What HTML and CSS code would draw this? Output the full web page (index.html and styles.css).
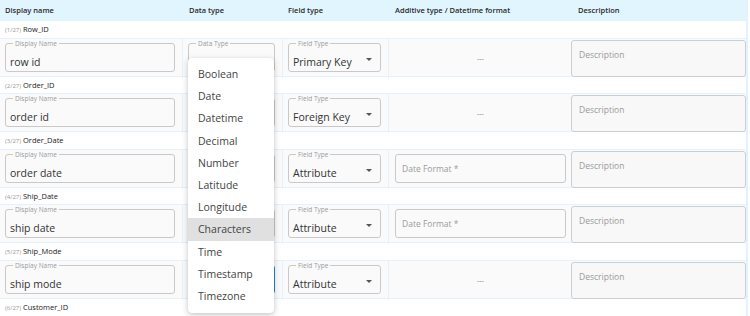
FILE: index.html
```html
<!DOCTYPE html>
<html lang="en">
  <head>
    <meta charset="UTF-8" />
    <title>Column mapping</title>
    <link rel="stylesheet" href="styles.css">
  </head>
  <body>
    <div class="mapping">
      <div class="head">
        <div>Display name</div>
        <div>Data type</div>
        <div>Field type</div>
        <div>Additive type / Datetime format</div>
        <div>Description</div>
      </div>

      <div class="col-label"><span class="idx">(1/27)</span> Row_ID</div>
      <div class="row">
        <div class="cell"><div class="field"><span class="legend">Display Name</span><span class="value">row id</span></div></div>
        <div class="cell"><div class="field"><span class="legend">Data Type</span></div></div>
        <div class="cell"><div class="field"><span class="legend">Field Type</span><span class="value">Primary Key</span><span class="caret"></span></div></div>
        <div class="cell dash">---</div>
        <div class="cell desc"><textarea placeholder="Description"></textarea></div>
      </div>

      <div class="col-label"><span class="idx">(2/27)</span> Order_ID</div>
      <div class="row">
        <div class="cell"><div class="field"><span class="legend">Display Name</span><span class="value">order id</span></div></div>
        <div class="cell"><div class="field"><span class="legend">Data Type</span></div></div>
        <div class="cell"><div class="field"><span class="legend">Field Type</span><span class="value">Foreign Key</span><span class="caret"></span></div></div>
        <div class="cell dash">---</div>
        <div class="cell desc"><textarea placeholder="Description"></textarea></div>
      </div>

      <div class="col-label"><span class="idx">(3/27)</span> Order_Date</div>
      <div class="row">
        <div class="cell"><div class="field"><span class="legend">Display Name</span><span class="value">order date</span></div></div>
        <div class="cell"><div class="field"><span class="legend">Data Type</span></div></div>
        <div class="cell"><div class="field"><span class="legend">Field Type</span><span class="value">Attribute</span><span class="caret"></span></div></div>
        <div class="cell"><input class="format" placeholder="Date Format *" /></div>
        <div class="cell desc"><textarea placeholder="Description"></textarea></div>
      </div>

      <div class="col-label"><span class="idx">(4/27)</span> Ship_Date</div>
      <div class="row">
        <div class="cell"><div class="field"><span class="legend">Display Name</span><span class="value">ship date</span></div></div>
        <div class="cell"><div class="field"><span class="legend">Data Type</span></div></div>
        <div class="cell"><div class="field"><span class="legend">Field Type</span><span class="value">Attribute</span><span class="caret"></span></div></div>
        <div class="cell"><input class="format" placeholder="Date Format *" /></div>
        <div class="cell desc"><textarea placeholder="Description"></textarea></div>
      </div>

      <div class="col-label"><span class="idx">(5/27)</span> Ship_Mode</div>
      <div class="row">
        <div class="cell"><div class="field"><span class="legend">Display Name</span><span class="value">ship mode</span></div></div>
        <div class="cell"><div class="field focused"><span class="legend">Data Type</span></div></div>
        <div class="cell"><div class="field"><span class="legend">Field Type</span><span class="value">Attribute</span><span class="caret"></span></div></div>
        <div class="cell dash">---</div>
        <div class="cell desc"><textarea placeholder="Description"></textarea></div>
      </div>

      <div class="col-label"><span class="idx">(6/27)</span> Customer_ID</div>

      <ul class="menu">
        <li>Boolean</li>
        <li>Date</li>
        <li>Datetime</li>
        <li>Decimal</li>
        <li>Number</li>
        <li>Latitude</li>
        <li>Longitude</li>
        <li class="active">Characters</li>
        <li>Time</li>
        <li>Timestamp</li>
        <li>Timezone</li>
      </ul>
    </div>
  </body>
</html>
```

FILE: styles.css
```css
* {
  margin: 0;
  padding: 0;
  box-sizing: border-box;
  font-family: "Open Sans", "Liberation Sans", sans-serif;
}

body {
  background: #fff;
  color: #333;
  overflow: hidden;
}

.mapping {
  position: relative;
  width: 748px;
  border-right: 2px solid #e3f3fc;
}

.head,
.row {
  display: grid;
  grid-template-columns: 182px 100px 106px 181px 177px;
}

.head {
  height: 21px;
  background: #e1f5fe;
  font-size: 7.5px;
  font-weight: 600;
  line-height: 21px;
  color: #2a2a2a;
}

.head div {
  padding-left: 5px;
}

.head div:nth-child(2) {
  padding-left: 7px;
}

.head div:nth-child(3) {
  padding-left: 6px;
}

.head div:nth-child(4) {
  padding-left: 7px;
}

.head div:nth-child(5) {
  padding-left: 9px;
}

.col-label {
  height: 16.6px;
  line-height: 16.6px;
  padding-left: 5px;
  font-size: 7.5px;
  color: #222;
}

.idx {
  font-size: 6px;
  color: #999;
}

.row {
  height: 39px;
  background: #fafafa;
  border-top: 1px solid #e3f2fd;
  border-bottom: 1px solid #e3f2fd;
}

.cell {
  padding: 4px 7px 4px 5px;
}

.cell + .cell {
  border-left: 1px solid #e3f2fd;
}

.cell:nth-child(4) {
  padding: 4px 3px 4px 6px;
}

.cell.desc {
  padding: 0 0 1px 2px;
  border-left: 0;
}

.dash {
  display: flex;
  align-items: center;
  justify-content: center;
  font-size: 7px;
  color: #777;
  padding-bottom: 9px;
}

.field {
  position: relative;
  height: 29px;
  border: 1px solid #c9c9c9;
  border-radius: 3px;
  padding: 11px 0 0 4px;
}

.field.focused {
  border-color: #1e88e5;
}

.legend {
  position: absolute;
  top: -5px;
  left: 7px;
  padding: 0 2px;
  background: #fafafa;
  font-size: 6.5px;
  line-height: 9px;
  color: #9a9a9a;
}

.value {
  display: block;
  font-size: 10.5px;
  line-height: 15px;
  color: #333;
}

.caret {
  position: absolute;
  top: 14px;
  right: 8px;
  border-left: 3px solid transparent;
  border-right: 3px solid transparent;
  border-top: 3.5px solid #555;
}

.format {
  width: 100%;
  height: 29px;
  border: 1px solid #c9c9c9;
  border-radius: 3px;
  background: #fafafa;
  padding-left: 6px;
  font-size: 8.5px;
  outline: 0;
}

textarea {
  display: block;
  width: 100%;
  height: 37px;
  margin-top: 1px;
  border: 1px solid #c8d0d6;
  border-radius: 3px;
  background: #f8f8f8;
  padding: 8px 7px;
  font-size: 8.5px;
  resize: none;
  outline: 0;
}

::placeholder {
  color: #9a9a9a;
}

.menu {
  position: absolute;
  top: 58px;
  left: 188px;
  width: 86px;
  padding: 5px 0 6px;
  list-style: none;
  background: #fff;
  border-radius: 4px;
  box-shadow: 0 2px 6px rgba(0, 0, 0, 0.22), 0 0 1px rgba(0, 0, 0, 0.12);
}

.menu li {
  height: 22.2px;
  line-height: 22.2px;
  padding-left: 10px;
  font-size: 10.5px;
  color: #444;
}

.menu li.active {
  background: #e0e0e0;
}
```
